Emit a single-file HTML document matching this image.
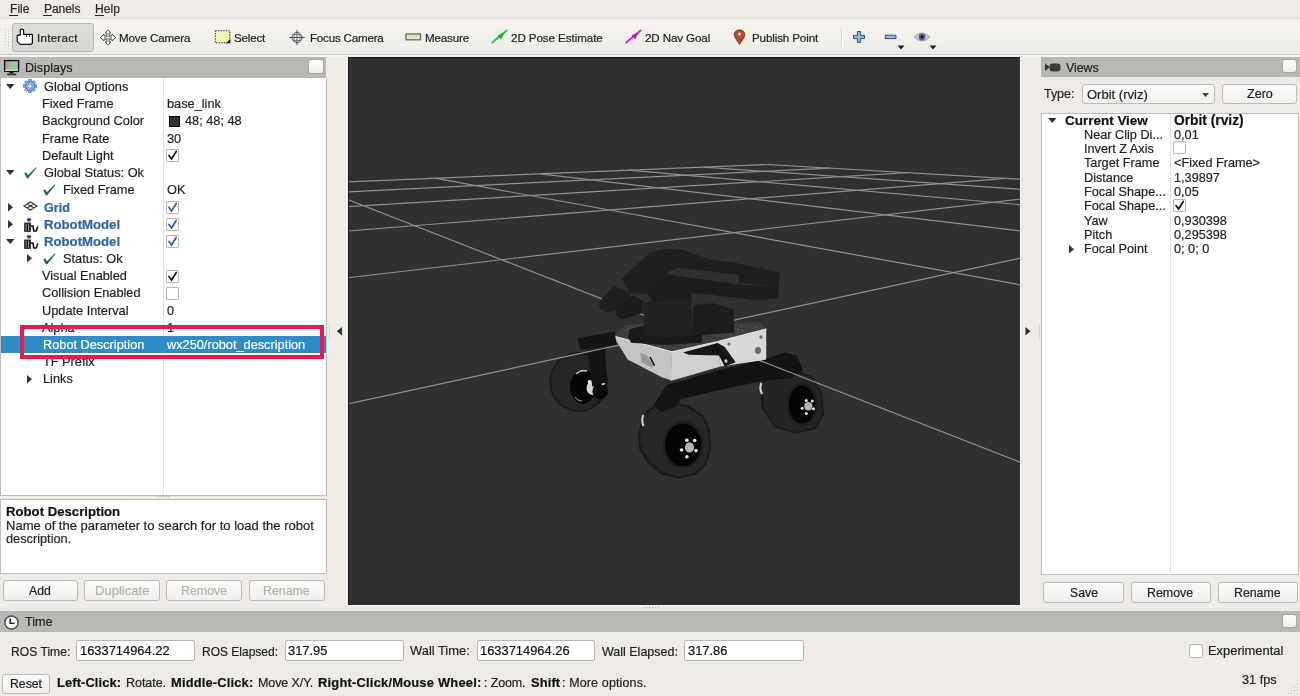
<!DOCTYPE html>
<html><head><meta charset="utf-8"><style>
html,body{margin:0;padding:0}
body{width:1300px;height:696px;overflow:hidden;position:relative;background:#eeebe7;font-family:"Liberation Sans",sans-serif;color:#1f1f1f}
.t{position:absolute;white-space:nowrap;line-height:1;will-change:transform;-webkit-text-stroke:0.2px currentColor}
svg{overflow:visible}
</style></head><body>
<div style="position:absolute;left:0px;top:0px;width:1300px;height:19px;background:#eeebe7"></div>
<div style="position:absolute;left:0px;top:18px;width:1300px;height:1px;background:#e2dfdb"></div>
<div class="t" style="left:9.50px;top:3.40px;font-size:12.00px;letter-spacing:0.060px;color:#2a2a2a">File</div>
<div style="position:absolute;left:9.0px;top:15px;width:9px;height:1px;background:#2a2a2a"></div>
<div class="t" style="left:43.50px;top:3.40px;font-size:12.00px;letter-spacing:-0.044px;color:#2a2a2a">Panels</div>
<div style="position:absolute;left:43.0px;top:15px;width:9px;height:1px;background:#2a2a2a"></div>
<div class="t" style="left:95.00px;top:3.40px;font-size:12.00px;letter-spacing:0.113px;color:#2a2a2a">Help</div>
<div style="position:absolute;left:94.5px;top:15px;width:9px;height:1px;background:#2a2a2a"></div>
<div style="position:absolute;left:0px;top:19px;width:1300px;height:35px;background:linear-gradient(#f7f4f0,#ecebe6)"></div>
<div style="position:absolute;left:0px;top:54px;width:1300px;height:1px;background:#cfccc7"></div>
<div style="position:absolute;left:0px;top:55px;width:1300px;height:2px;background:#f4f2ee"></div>
<div style="position:absolute;left:5px;top:29px;width:1px;height:1px;background:#bbb"></div>
<div style="position:absolute;left:8px;top:30px;width:1px;height:1px;background:#bbb"></div>
<div style="position:absolute;left:5px;top:32px;width:1px;height:1px;background:#bbb"></div>
<div style="position:absolute;left:8px;top:33px;width:1px;height:1px;background:#bbb"></div>
<div style="position:absolute;left:5px;top:35px;width:1px;height:1px;background:#bbb"></div>
<div style="position:absolute;left:8px;top:36px;width:1px;height:1px;background:#bbb"></div>
<div style="position:absolute;left:5px;top:38px;width:1px;height:1px;background:#bbb"></div>
<div style="position:absolute;left:8px;top:39px;width:1px;height:1px;background:#bbb"></div>
<div style="position:absolute;left:5px;top:41px;width:1px;height:1px;background:#bbb"></div>
<div style="position:absolute;left:8px;top:42px;width:1px;height:1px;background:#bbb"></div>
<div style="position:absolute;left:5px;top:44px;width:1px;height:1px;background:#bbb"></div>
<div style="position:absolute;left:8px;top:45px;width:1px;height:1px;background:#bbb"></div>
<div style="position:absolute;left:12px;top:23px;width:82px;height:29px;box-sizing:border-box;border:1px solid #b9b6b1;border-radius:3px;background:linear-gradient(#dedcd8,#d8d6d2)"></div>
<div class="t" style="left:36.50px;top:32.32px;font-size:11.60px;letter-spacing:0.259px;color:#222">Interact</div>
<div class="t" style="left:119.40px;top:32.32px;font-size:11.60px;letter-spacing:-0.131px;color:#222">Move Camera</div>
<div class="t" style="left:234.30px;top:32.32px;font-size:11.60px;letter-spacing:-0.190px;color:#222">Select</div>
<div class="t" style="left:309.60px;top:32.32px;font-size:11.60px;letter-spacing:-0.209px;color:#222">Focus Camera</div>
<div class="t" style="left:424.90px;top:32.32px;font-size:11.60px;letter-spacing:-0.171px;color:#222">Measure</div>
<div class="t" style="left:511.00px;top:32.32px;font-size:11.60px;letter-spacing:-0.071px;color:#222">2D Pose Estimate</div>
<div class="t" style="left:644.50px;top:32.32px;font-size:11.60px;letter-spacing:-0.111px;color:#222">2D Nav Goal</div>
<div class="t" style="left:751.50px;top:32.32px;font-size:11.60px;letter-spacing:-0.124px;color:#222">Publish Point</div>
<svg style="position:absolute;left:16px;top:28px;" width="18" height="18" viewBox="0 0 18 18"><path d="M4.3 7.6 V2.6 Q4.3 1.2 5.95 1.2 Q7.6 1.2 7.6 2.6 V6.4 H15.8 Q16.4 6.4 16.4 7 V15 L15 16.4 H4.2 L1.2 13.6 V7.8 Q1.2 7.2 1.8 7.2 H4.3" fill="#fff" stroke="#111" stroke-width="1.25" stroke-linejoin="round"/><path d="M10.5 6.6 V9 M13.5 6.6 V9" stroke="#333" stroke-width="1"/></svg>
<svg style="position:absolute;left:99px;top:29px;" width="18" height="17" viewBox="0 0 18 17"><g fill="#f4f4f4" stroke="#555" stroke-width="1"><path d="M9 0.8 L12 4 L10.2 4 L10.2 6.8 L13 6.8 L13 5 L16.5 8.5 L13 12 L13 10.2 L10.2 10.2 L10.2 13 L12 13 L9 16.2 L6 13 L7.8 13 L7.8 10.2 L5 10.2 L5 12 L1.5 8.5 L5 5 L5 6.8 L7.8 6.8 L7.8 4 L6 4 Z"/></g><path d="M5 8.5 Q9 6 13 8.5 M5 8.5 Q9 11 13 8.5" fill="none" stroke="#777" stroke-width="0.8"/></svg>
<svg style="position:absolute;left:213px;top:29px;" width="19" height="16" viewBox="0 0 19 16"><rect x="2.3" y="1.8" width="14.5" height="12" fill="#f7f3b4" stroke="#222" stroke-width="1" stroke-dasharray="1.4 1.2"/><path d="M17.3 10 L17.3 14.3 L13 14.3 Z" fill="#111"/></svg>
<svg style="position:absolute;left:288px;top:29px;" width="18" height="17" viewBox="0 0 18 17"><g fill="none" stroke="#555" stroke-width="1"><circle cx="9" cy="8.5" r="5" fill="#f4f4f4"/><path d="M9 0.8 V16.2 M1.2 8.5 H16.8"/><rect x="6" y="5.5" width="6" height="6" stroke="#777"/></g></svg>
<svg style="position:absolute;left:405px;top:33px;" width="16" height="8" viewBox="0 0 16 8"><rect x="1" y="1" width="14.5" height="5.8" fill="#e8e4c4" stroke="#6e6c5c" stroke-width="1.3"/><path d="M4 1.6 V2.8 M6.5 1.6 V2.8 M9 1.6 V2.8 M11.5 1.6 V2.8" stroke="#9a988a" stroke-width="0.7"/></svg>
<svg style="position:absolute;left:490px;top:29px;" width="18" height="16" viewBox="0 0 18 16"><path d="M2.3 13.5 L16.6 1.5" stroke="#2ccc44" stroke-width="2" stroke-linecap="round"/><path d="M14.8 3 L7.6 6.6 L11.2 10.4 Z" fill="#1fae36"/></svg>
<svg style="position:absolute;left:624px;top:29px;" width="18" height="16" viewBox="0 0 18 16"><path d="M2.3 13.5 L16.6 1.5" stroke="#d02ad2" stroke-width="2" stroke-linecap="round"/><path d="M14.8 3 L7.6 6.6 L11.2 10.4 Z" fill="#b01cb4"/></svg>
<svg style="position:absolute;left:733px;top:29px;" width="13" height="16" viewBox="0 0 13 16"><path d="M6.5 15.5 L2 8.5 Q0.5 6 1.5 3.8 Q3 0.8 6.5 0.8 Q10 0.8 11.5 3.8 Q12.5 6 11 8.5 Z" fill="#b34a2c" stroke="#7a2e18" stroke-width="0.8"/><circle cx="6.5" cy="5" r="1.6" fill="#f3e3dc"/></svg>
<div style="position:absolute;left:841px;top:28px;width:1px;height:19px;background:#d7d4cf"></div>
<div style="position:absolute;left:842px;top:28px;width:1px;height:19px;background:#fbfbfa"></div>
<svg style="position:absolute;left:852px;top:30px;" width="14" height="14" viewBox="0 0 14 14"><path d="M5.4 1.5 H8.6 V5.4 H12.5 V8.6 H8.6 V12.5 H5.4 V8.6 H1.5 V5.4 H5.4 Z" fill="#8db4e4" stroke="#34558a" stroke-width="1"/></svg>
<svg style="position:absolute;left:884px;top:34px;" width="13" height="6" viewBox="0 0 13 6"><rect x="1.3" y="1.2" width="10.6" height="3.4" fill="#8db4e4" stroke="#34558a" stroke-width="1"/></svg>
<svg style="position:absolute;left:897px;top:45px;" width="8" height="5" viewBox="0 0 8 5"><path d="M0.5 0.5 H7.5 L4 4.5 Z" fill="#222"/></svg>
<svg style="position:absolute;left:913px;top:31px;" width="18" height="12" viewBox="0 0 18 12"><path d="M1 6 Q9 -2 17 6 Q9 14 1 6 Z" fill="#c9c9dc" stroke="#9a9ab0" stroke-width="0.8"/><circle cx="9" cy="6" r="3.4" fill="#5a5f8a"/><circle cx="9" cy="6" r="1.4" fill="#111"/></svg>
<svg style="position:absolute;left:929px;top:45px;" width="8" height="5" viewBox="0 0 8 5"><path d="M0.5 0.5 H7.5 L4 4.5 Z" fill="#222"/></svg>
<div style="position:absolute;left:0px;top:57px;width:326px;height:21px;background:#bab8b4"></div>
<svg style="position:absolute;left:3px;top:59px;" width="17" height="17" viewBox="0 0 17 17"><defs><linearGradient id="mg" x1="0" x2="1"><stop offset="0" stop-color="#d9828f"/><stop offset="0.5" stop-color="#86d886"/><stop offset="1" stop-color="#b0a8f2"/></linearGradient></defs><rect x="1.6" y="1.6" width="14" height="10.8" fill="url(#mg)" stroke="#111" stroke-width="1.3"/><rect x="2.3" y="10.5" width="12.6" height="1.4" fill="#e8f0e8" opacity="0.7"/><rect x="6.5" y="12.8" width="4" height="1.6" fill="#111"/><rect x="4" y="14.4" width="9.5" height="1.8" rx="0.9" fill="#333"/></svg>
<div class="t" style="left:25.00px;top:61.95px;font-size:12.57px;color:#222">Displays</div>
<div style="position:absolute;left:308px;top:59px;width:16px;height:15px;box-sizing:border-box;border:1px solid #a8a6a2;border-radius:3px;background:linear-gradient(#fdfdfc,#f0efed)"></div>
<div style="position:absolute;left:0px;top:78px;width:327px;height:418px;box-sizing:border-box;background:#fff;border:1px solid #c0bdb8;border-top:none"></div>
<div style="position:absolute;left:163px;top:78px;width:1px;height:417px;background:#e3e3e3"></div>
<div style="position:absolute;left:1px;top:336px;width:325px;height:17px;background:#308cc6"></div>
<svg style="position:absolute;left:6px;top:83.8px;" width="9" height="6" viewBox="0 0 9 6"><path d="M0 0 H8.5 L4.25 5 Z" fill="#333"/></svg>
<svg style="position:absolute;left:23px;top:79.3px;" width="14" height="14" viewBox="0 0 14 14"><g transform="translate(7 7)"><g fill="#9ab8ec" stroke="#4f74b8" stroke-width="0.9"><rect x="-1.3" y="-6.3" width="2.6" height="2.6" transform="rotate(0)"/><rect x="-1.3" y="-6.3" width="2.6" height="2.6" transform="rotate(45)"/><rect x="-1.3" y="-6.3" width="2.6" height="2.6" transform="rotate(90)"/><rect x="-1.3" y="-6.3" width="2.6" height="2.6" transform="rotate(135)"/><rect x="-1.3" y="-6.3" width="2.6" height="2.6" transform="rotate(180)"/><rect x="-1.3" y="-6.3" width="2.6" height="2.6" transform="rotate(225)"/><rect x="-1.3" y="-6.3" width="2.6" height="2.6" transform="rotate(270)"/><rect x="-1.3" y="-6.3" width="2.6" height="2.6" transform="rotate(315)"/><circle r="4.3"/></g><circle r="2.2" fill="#dfeaff" stroke="#6a8ccc" stroke-width="0.9"/></g></svg>
<div class="t" style="left:44.30px;top:81.00px;font-size:12.75px;color:#1f1f1f">Global Options</div>
<div class="t" style="left:42.00px;top:98.20px;font-size:12.75px;color:#1f1f1f">Fixed Frame</div>
<div class="t" style="left:166.80px;top:98.20px;font-size:12.75px;color:#1f1f1f">base_link</div>
<div class="t" style="left:42.00px;top:115.40px;font-size:12.75px;color:#1f1f1f">Background Color</div>
<div style="position:absolute;left:169px;top:115.60000000000001px;width:11px;height:11px;box-sizing:border-box;border:1px solid #000;background:#303030"></div>
<div class="t" style="left:184.70px;top:115.40px;font-size:12.75px;color:#1f1f1f">48; 48; 48</div>
<div class="t" style="left:42.00px;top:132.60px;font-size:12.75px;color:#1f1f1f">Frame Rate</div>
<div class="t" style="left:166.80px;top:132.60px;font-size:12.75px;color:#1f1f1f">30</div>
<div class="t" style="left:42.00px;top:149.80px;font-size:12.75px;color:#1f1f1f">Default Light</div>
<div style="position:absolute;left:166px;top:149.4px;width:13px;height:13px;box-sizing:border-box;border:1px solid #b9b7b3;background:#fff;border-radius:1px"></div>
<svg style="position:absolute;left:167px;top:150.4px;" width="11" height="11" viewBox="0 0 11 11"><path d="M2 5.5 L4.6 9 L9.2 1.5" fill="none" stroke="#111" stroke-width="1.7" stroke-linecap="round"/></svg>
<svg style="position:absolute;left:6px;top:169.8px;" width="9" height="6" viewBox="0 0 9 6"><path d="M0 0 H8.5 L4.25 5 Z" fill="#333"/></svg>
<svg style="position:absolute;left:24px;top:167.0px;" width="13" height="12" viewBox="0 0 13 12"><path d="M0.3 6.6 L2.2 5.3 L3.9 8.2 L11.8 0.2 L12.4 0.9 L4.2 11.2 L2.9 11.2 Z" fill="#1f6b2c"/></svg>
<div class="t" style="left:44.20px;top:167.00px;font-size:12.75px;color:#1f1f1f">Global Status: Ok</div>
<svg style="position:absolute;left:43px;top:183.89999999999998px;" width="13" height="12" viewBox="0 0 13 12"><path d="M0.3 6.6 L2.2 5.3 L3.9 8.2 L11.8 0.2 L12.4 0.9 L4.2 11.2 L2.9 11.2 Z" fill="#1f6b2c"/></svg>
<div class="t" style="left:63.20px;top:184.20px;font-size:12.75px;color:#1f1f1f">Fixed Frame</div>
<div class="t" style="left:166.80px;top:184.20px;font-size:12.75px;color:#1f1f1f">OK</div>
<svg style="position:absolute;left:7.6px;top:202.7px;" width="6" height="9" viewBox="0 0 6 9"><path d="M0 0 V8.5 L5 4.25 Z" fill="#333"/></svg>
<svg style="position:absolute;left:23px;top:201.39999999999998px;" width="15" height="10" viewBox="0 0 15 10"><g fill="none" stroke="#333" stroke-width="1.1"><path d="M7.5 1 L14 5 L7.5 9 L1 5 Z M4.25 3 L10.75 7 M10.75 3 L4.25 7"/></g></svg>
<div class="t" style="left:44.30px;top:201.52px;font-size:12.60px;font-weight:bold;color:#2f649f">Grid</div>
<div style="position:absolute;left:166px;top:200.99999999999997px;width:13px;height:13px;box-sizing:border-box;border:1px solid #b9b7b3;background:#fff;border-radius:1px"></div>
<svg style="position:absolute;left:167px;top:201.99999999999997px;" width="11" height="11" viewBox="0 0 11 11"><path d="M2 5.5 L4.6 9 L9.2 1.5" fill="none" stroke="#2a5a9a" stroke-width="1.7" stroke-linecap="round"/></svg>
<svg style="position:absolute;left:7.6px;top:219.9px;" width="6" height="9" viewBox="0 0 6 9"><path d="M0 0 V8.5 L5 4.25 Z" fill="#333"/></svg>
<svg style="position:absolute;left:23px;top:216.6px;" width="16" height="16" viewBox="0 0 16 16"><ellipse cx="6" cy="2.6" rx="2.3" ry="1.5" fill="#3c3c80"/><rect x="4.6" y="4.2" width="2.8" height="1" fill="#888"/><rect x="1.2" y="5.6" width="6.6" height="9.2" fill="#111"/><path d="M3.1 6.5 V13.8 M5.6 6.5 V13.8" stroke="#cfcfcf" stroke-width="0.8"/><path d="M7.6 9 H10 L10.8 14 H13.2 L14.8 9.4" fill="none" stroke="#111" stroke-width="1.6"/></svg>
<div class="t" style="left:44.30px;top:218.26px;font-size:13.18px;font-weight:bold;color:#2f649f">RobotModel</div>
<div style="position:absolute;left:166px;top:218.2px;width:13px;height:13px;box-sizing:border-box;border:1px solid #b9b7b3;background:#fff;border-radius:1px"></div>
<svg style="position:absolute;left:167px;top:219.2px;" width="11" height="11" viewBox="0 0 11 11"><path d="M2 5.5 L4.6 9 L9.2 1.5" fill="none" stroke="#2a5a9a" stroke-width="1.7" stroke-linecap="round"/></svg>
<svg style="position:absolute;left:6px;top:238.6px;" width="9" height="6" viewBox="0 0 9 6"><path d="M0 0 H8.5 L4.25 5 Z" fill="#333"/></svg>
<svg style="position:absolute;left:23px;top:233.79999999999998px;" width="16" height="16" viewBox="0 0 16 16"><ellipse cx="6" cy="2.6" rx="2.3" ry="1.5" fill="#3c3c80"/><rect x="4.6" y="4.2" width="2.8" height="1" fill="#888"/><rect x="1.2" y="5.6" width="6.6" height="9.2" fill="#111"/><path d="M3.1 6.5 V13.8 M5.6 6.5 V13.8" stroke="#cfcfcf" stroke-width="0.8"/><path d="M7.6 9 H10 L10.8 14 H13.2 L14.8 9.4" fill="none" stroke="#111" stroke-width="1.6"/></svg>
<div class="t" style="left:44.30px;top:235.46px;font-size:13.18px;font-weight:bold;color:#2f649f">RobotModel</div>
<div style="position:absolute;left:166px;top:235.39999999999998px;width:13px;height:13px;box-sizing:border-box;border:1px solid #b9b7b3;background:#fff;border-radius:1px"></div>
<svg style="position:absolute;left:167px;top:236.39999999999998px;" width="11" height="11" viewBox="0 0 11 11"><path d="M2 5.5 L4.6 9 L9.2 1.5" fill="none" stroke="#2a5a9a" stroke-width="1.7" stroke-linecap="round"/></svg>
<svg style="position:absolute;left:26.6px;top:254.3px;" width="6" height="9" viewBox="0 0 6 9"><path d="M0 0 V8.5 L5 4.25 Z" fill="#333"/></svg>
<svg style="position:absolute;left:43px;top:252.7px;" width="13" height="12" viewBox="0 0 13 12"><path d="M0.3 6.6 L2.2 5.3 L3.9 8.2 L11.8 0.2 L12.4 0.9 L4.2 11.2 L2.9 11.2 Z" fill="#1f6b2c"/></svg>
<div class="t" style="left:63.20px;top:253.00px;font-size:12.75px;color:#1f1f1f">Status: Ok</div>
<div class="t" style="left:42.00px;top:270.20px;font-size:12.75px;color:#1f1f1f">Visual Enabled</div>
<div style="position:absolute;left:166px;top:269.8px;width:13px;height:13px;box-sizing:border-box;border:1px solid #b9b7b3;background:#fff;border-radius:1px"></div>
<svg style="position:absolute;left:167px;top:270.8px;" width="11" height="11" viewBox="0 0 11 11"><path d="M2 5.5 L4.6 9 L9.2 1.5" fill="none" stroke="#111" stroke-width="1.7" stroke-linecap="round"/></svg>
<div class="t" style="left:42.00px;top:287.40px;font-size:12.75px;color:#1f1f1f">Collision Enabled</div>
<div style="position:absolute;left:166px;top:287.0px;width:13px;height:13px;box-sizing:border-box;border:1px solid #b9b7b3;background:#fff;border-radius:1px"></div>
<div class="t" style="left:42.00px;top:304.60px;font-size:12.75px;color:#1f1f1f">Update Interval</div>
<div class="t" style="left:166.80px;top:304.60px;font-size:12.75px;color:#1f1f1f">0</div>
<div class="t" style="left:42.00px;top:321.80px;font-size:12.75px;color:#1f1f1f">Alpha</div>
<div class="t" style="left:166.80px;top:321.80px;font-size:12.75px;color:#1f1f1f">1</div>
<div class="t" style="left:42.60px;top:339.00px;font-size:12.75px;color:#ffffff">Robot Description</div>
<div class="t" style="left:166.86px;top:339.00px;font-size:12.75px;color:#ffffff">wx250/robot_description</div>
<div class="t" style="left:42.60px;top:356.20px;font-size:12.75px;color:#1f1f1f">TF Prefix</div>
<svg style="position:absolute;left:26.6px;top:374.7px;" width="6" height="9" viewBox="0 0 6 9"><path d="M0 0 V8.5 L5 4.25 Z" fill="#333"/></svg>
<div class="t" style="left:42.60px;top:373.40px;font-size:12.75px;color:#1f1f1f">Links</div>
<div style="position:absolute;left:20px;top:325px;width:304px;height:34px;box-sizing:border-box;border:4.4px solid #e31b4e"></div>
<div style="position:absolute;left:158px;top:496px;width:1px;height:1px;background:#c0bdb8"></div>
<div style="position:absolute;left:160px;top:496px;width:1px;height:1px;background:#c0bdb8"></div>
<div style="position:absolute;left:162px;top:496px;width:1px;height:1px;background:#c0bdb8"></div>
<div style="position:absolute;left:164px;top:496px;width:1px;height:1px;background:#c0bdb8"></div>
<div style="position:absolute;left:166px;top:496px;width:1px;height:1px;background:#c0bdb8"></div>
<div style="position:absolute;left:168px;top:496px;width:1px;height:1px;background:#c0bdb8"></div>
<div style="position:absolute;left:0px;top:499px;width:327px;height:75px;box-sizing:border-box;background:#fff;border:1px solid #c0bdb8"></div>
<div class="t" style="left:5.60px;top:504.96px;font-size:13.18px;font-weight:bold;color:#111">Robot Description</div>
<div class="t" style="left:5.60px;top:519.17px;font-size:13.04px;color:#1f1f1f">Name of the parameter to search for to load the robot</div>
<div class="t" style="left:5.60px;top:533.40px;font-size:12.75px;color:#1f1f1f">description.</div>
<div style="position:absolute;left:2.5px;top:580px;width:75.0px;height:21px;box-sizing:border-box;border:1px solid #bdbab5;border-radius:3px;background:linear-gradient(#fbfbfa,#efeeec)"></div>
<div class="t" style="left:29.00px;top:585.10px;font-size:12.25px;color:#1f1f1f">Add</div>
<div style="position:absolute;left:84.4px;top:580px;width:75.19999999999999px;height:21px;box-sizing:border-box;border:1px solid #bdbab5;border-radius:3px;background:linear-gradient(#fbfbfa,#efeeec)"></div>
<div class="t" style="left:94.50px;top:584.44px;font-size:13.07px;color:#b3b1ad">Duplicate</div>
<div style="position:absolute;left:166.4px;top:580px;width:75.4px;height:21px;box-sizing:border-box;border:1px solid #bdbab5;border-radius:3px;background:linear-gradient(#fbfbfa,#efeeec)"></div>
<div class="t" style="left:181.00px;top:584.98px;font-size:12.40px;color:#b3b1ad">Remove</div>
<div style="position:absolute;left:248.7px;top:580px;width:76.0px;height:21px;box-sizing:border-box;border:1px solid #bdbab5;border-radius:3px;background:linear-gradient(#fbfbfa,#efeeec)"></div>
<div class="t" style="left:262.90px;top:585.02px;font-size:12.35px;color:#b3b1ad">Rename</div>
<div style="position:absolute;left:329px;top:325px;width:1px;height:1px;background:#bfbcb7"></div>
<div style="position:absolute;left:329px;top:327px;width:1px;height:1px;background:#bfbcb7"></div>
<div style="position:absolute;left:329px;top:329px;width:1px;height:1px;background:#bfbcb7"></div>
<div style="position:absolute;left:329px;top:331px;width:1px;height:1px;background:#bfbcb7"></div>
<div style="position:absolute;left:329px;top:333px;width:1px;height:1px;background:#bfbcb7"></div>
<div style="position:absolute;left:329px;top:335px;width:1px;height:1px;background:#bfbcb7"></div>
<div style="position:absolute;left:329px;top:337px;width:1px;height:1px;background:#bfbcb7"></div>
<div style="position:absolute;left:329px;top:339px;width:1px;height:1px;background:#bfbcb7"></div>
<svg style="position:absolute;left:336px;top:327px;" width="7" height="9" viewBox="0 0 7 9"><path d="M6 0 V8.5 L0.8 4.25 Z" fill="#333"/></svg>
<div style="position:absolute;left:1039px;top:325px;width:1px;height:1px;background:#bfbcb7"></div>
<div style="position:absolute;left:1039px;top:327px;width:1px;height:1px;background:#bfbcb7"></div>
<div style="position:absolute;left:1039px;top:329px;width:1px;height:1px;background:#bfbcb7"></div>
<div style="position:absolute;left:1039px;top:331px;width:1px;height:1px;background:#bfbcb7"></div>
<div style="position:absolute;left:1039px;top:333px;width:1px;height:1px;background:#bfbcb7"></div>
<div style="position:absolute;left:1039px;top:335px;width:1px;height:1px;background:#bfbcb7"></div>
<div style="position:absolute;left:1039px;top:337px;width:1px;height:1px;background:#bfbcb7"></div>
<div style="position:absolute;left:1039px;top:339px;width:1px;height:1px;background:#bfbcb7"></div>
<svg style="position:absolute;left:1025px;top:326.5px;" width="7" height="9" viewBox="0 0 7 9"><path d="M0.5 0 V8.5 L5.5 4.25 Z" fill="#333"/></svg>
<div style="position:absolute;left:346px;top:57px;width:1px;height:549px;background:#fafafa"></div>
<div style="position:absolute;left:1020px;top:57px;width:1px;height:549px;background:#fafafa"></div>
<div style="position:absolute;left:347px;top:605px;width:674px;height:1px;background:#fafafa"></div>
<div style="position:absolute;left:643px;top:607px;width:1px;height:1px;background:#b5b2ad"></div>
<div style="position:absolute;left:646px;top:607px;width:1px;height:1px;background:#b5b2ad"></div>
<div style="position:absolute;left:649px;top:607px;width:1px;height:1px;background:#b5b2ad"></div>
<div style="position:absolute;left:652px;top:607px;width:1px;height:1px;background:#b5b2ad"></div>
<div style="position:absolute;left:655px;top:607px;width:1px;height:1px;background:#b5b2ad"></div>
<div style="position:absolute;left:658px;top:607px;width:1px;height:1px;background:#b5b2ad"></div>
<div style="position:absolute;left:348px;top:57px;width:672px;height:548px;background:#303030;overflow:hidden">
<svg width="672" height="548" style="position:absolute;left:0;top:0" viewBox="348 57 672 548">
<ellipse cx="578.6" cy="382.0" rx="28.4" ry="29.0" fill="#262626" stroke="#1c1c1c" stroke-width="2"/><ellipse cx="583.0" cy="386.7" rx="12.8" ry="17.2" fill="#050505" /><path d="M576 374 Q581 369 587 371" stroke="#d0d0d0" stroke-width="1.5" fill="none"/><path d="M575 397 Q578 401 582 401" stroke="#9a9a9a" stroke-width="1.2" fill="none"/><ellipse cx="593.0" cy="388.0" rx="6.5" ry="7.2" fill="#d8d8d8" /><ellipse cx="600.2" cy="391.3" rx="7.8" ry="8.2" fill="#0a0a0a" /><ellipse cx="603.0" cy="383.5" rx="1.8" ry="1.8" fill="#dcdcdc" /><ellipse cx="590.0" cy="381.8" rx="2.4" ry="1.8" fill="#eeeeee" /><polygon points="760.8,386.3 770.8,374.2 791.0,370.2 811.1,376.2 821.1,392.3 823.2,414.4 815.1,428.5 795.0,432.6 774.9,426.5 762.8,408.4" fill="#252525" stroke="#1b1b1b" stroke-width="2" stroke-linejoin="round"/><ellipse cx="802.0" cy="404.4" rx="15.5" ry="21.5" fill="#1e1e1e" /><ellipse cx="802.0" cy="404.4" rx="13.2" ry="19.1" fill="#050505" /><ellipse cx="808.3" cy="406.2" rx="4.0" ry="4.2" fill="#b5b5b5" /><ellipse cx="806.3" cy="400.6" rx="1.5" ry="1.5" fill="#e4e4e4" /><ellipse cx="812.3" cy="401.0" rx="1.5" ry="1.5" fill="#e4e4e4" /><ellipse cx="813.5" cy="408.8" rx="1.5" ry="1.5" fill="#e4e4e4" /><ellipse cx="806.3" cy="413.6" rx="1.5" ry="1.5" fill="#e4e4e4" /><ellipse cx="802.1" cy="408.2" rx="1.5" ry="1.5" fill="#e4e4e4" /><path d="M761.5 383 Q759 388 762 394" stroke="#cfcfcf" stroke-width="2.2" fill="none"/><polygon points="639.1,433.8 644.2,414.4 655.9,405.3 672.7,402.8 688.2,406.6 702.4,415.7 708.9,428.6 710.2,449.3 705.0,464.9 694.7,473.9 679.2,477.8 662.3,473.9 648.1,462.3 640.3,449.3" fill="#272727" stroke="#1a1a1a" stroke-width="2" stroke-linejoin="round"/><path d="M644 420 Q660 400 690 406 Q708 418 709 440" fill="none" stroke="#1c1c1c" stroke-width="1.6" stroke-dasharray="2 2.5"/><path d="M642 445 Q648 468 675 476" fill="none" stroke="#1c1c1c" stroke-width="1.6" stroke-dasharray="2 2.5"/><ellipse cx="683.0" cy="444.8" rx="20.5" ry="23.8" fill="#1e1e1e" /><ellipse cx="683.0" cy="444.8" rx="18.1" ry="21.3" fill="#040404" /><ellipse cx="689.5" cy="447.4" rx="4.6" ry="5.2" fill="#b4b4b4" /><ellipse cx="686.9" cy="440.3" rx="1.8" ry="1.8" fill="#e4e4e4" /><ellipse cx="694.7" cy="440.5" rx="1.8" ry="1.8" fill="#e4e4e4" /><ellipse cx="696.0" cy="450.6" rx="1.8" ry="1.8" fill="#e4e4e4" /><ellipse cx="686.9" cy="456.8" rx="1.8" ry="1.8" fill="#e4e4e4" /><ellipse cx="681.5" cy="450.0" rx="1.8" ry="1.8" fill="#e4e4e4" /><path d="M643.5 415 Q641 420 643.5 426" stroke="#c8c8c8" stroke-width="2.2" fill="none"/><polygon points="577.2,338.4 615.2,331.5 616.3,345.3 580.7,349.9" fill="#151515" /><polygon points="587.6,349.9 604.8,347.6 607.1,382.0 592.2,386.7" fill="#141414" /><polygon points="666.2,385.3 718.5,370.2 760.8,360.1 784.9,352.5 797.0,355.7 803.0,370.2 791.0,378.2 760.8,381.2 714.5,391.3 670.2,401.4 665.2,398.4" fill="#131313" /><polygon points="666.2,385.3 654.1,404.4 660.2,412.4 676.3,406.4 682.3,396.3" fill="#161616" />
<g transform="translate(348 57)"><g stroke="#8e8e8e" stroke-width="1.2"><line x1="419.5" y1="107.5" x2="11316.5" y2="740.8"/><line x1="419.5" y1="107.5" x2="-1611.6" y2="191.2"/><line x1="355.3" y1="110.1" x2="401882.0" y2="28233.1"/><line x1="482.2" y1="111.1" x2="-2294.4" y2="247.7"/><line x1="280.6" y1="113.2" x2="319386.8" y2="28233.1"/><line x1="559.6" y1="115.6" x2="-4221.1" y2="407.1"/><line x1="192.5" y1="116.9" x2="236891.5" y2="28233.1"/><line x1="657.4" y1="121.3" x2="-45534.4" y2="3824.9"/><line x1="87.0" y1="121.2" x2="154396.3" y2="28233.1"/><line x1="785.2" y1="128.8" x2="-239255.4" y2="28233.1"/><line x1="-41.5" y1="126.5" x2="71901.0" y2="28233.1"/><line x1="959.0" y1="138.9" x2="-128547.8" y2="28233.1"/><line x1="-201.6" y1="133.1" x2="-10594.2" y2="28233.1"/><line x1="1209.2" y1="153.4" x2="-17840.1" y2="28233.1"/><line x1="-406.3" y1="141.5" x2="-93089.4" y2="28233.1"/><line x1="1600.3" y1="176.1" x2="92867.5" y2="28233.1"/><line x1="-677.6" y1="152.7" x2="-175584.7" y2="28233.1"/><line x1="2298.3" y1="216.7" x2="203575.1" y2="28233.1"/><line x1="-1054.1" y1="168.2" x2="-258079.9" y2="28233.1"/><line x1="3897.3" y1="309.6" x2="314282.7" y2="28233.1"/><line x1="-1611.6" y1="191.2" x2="-340575.2" y2="28233.1"/><line x1="11316.5" y1="740.8" x2="424990.4" y2="28233.1"/></g></g>
<polygon points="615.2,333.8 626.7,324.6 760.0,322.3 766.9,329.2 766.9,331.5 679.5,352.2 656.6,347.6 615.2,336.1" fill="#3e3e3e" /><rect x="710.1" y="324.0" width="1" height="1" fill="#7a7a7a"/><rect x="742.3" y="329.8" width="1" height="1" fill="#7a7a7a"/><rect x="629.8" y="326.1" width="1" height="1" fill="#7a7a7a"/><rect x="736.7" y="334.3" width="1" height="1" fill="#7a7a7a"/><rect x="707.8" y="326.7" width="1" height="1" fill="#7a7a7a"/><rect x="726.7" y="331.3" width="1" height="1" fill="#7a7a7a"/><rect x="737.2" y="329.2" width="1" height="1" fill="#7a7a7a"/><rect x="633.4" y="337.9" width="1" height="1" fill="#7a7a7a"/><rect x="737.6" y="332.4" width="1" height="1" fill="#7a7a7a"/><rect x="754.9" y="326.7" width="1" height="1" fill="#7a7a7a"/><rect x="658.6" y="346.3" width="1" height="1" fill="#7a7a7a"/><rect x="696.3" y="346.5" width="1" height="1" fill="#7a7a7a"/><rect x="726.5" y="338.9" width="1" height="1" fill="#7a7a7a"/><rect x="700.7" y="346.8" width="1" height="1" fill="#7a7a7a"/><rect x="664.0" y="345.2" width="1" height="1" fill="#7a7a7a"/><rect x="725.8" y="324.6" width="1" height="1" fill="#7a7a7a"/><rect x="713.1" y="340.9" width="1" height="1" fill="#7a7a7a"/><rect x="673.3" y="348.2" width="1" height="1" fill="#7a7a7a"/><rect x="632.0" y="330.1" width="1" height="1" fill="#7a7a7a"/><rect x="725.5" y="327.5" width="1" height="1" fill="#7a7a7a"/><rect x="706.4" y="343.8" width="1" height="1" fill="#7a7a7a"/><rect x="730.1" y="334.0" width="1" height="1" fill="#7a7a7a"/><rect x="636.8" y="335.8" width="1" height="1" fill="#7a7a7a"/><rect x="761.8" y="328.6" width="1" height="1" fill="#7a7a7a"/><rect x="709.6" y="332.4" width="1" height="1" fill="#7a7a7a"/><rect x="756.8" y="331.0" width="1" height="1" fill="#7a7a7a"/><rect x="718.0" y="324.9" width="1" height="1" fill="#7a7a7a"/><rect x="631.0" y="339.1" width="1" height="1" fill="#7a7a7a"/><rect x="734.9" y="338.1" width="1" height="1" fill="#7a7a7a"/><rect x="740.5" y="325.4" width="1" height="1" fill="#7a7a7a"/><rect x="628.0" y="336.0" width="1" height="1" fill="#7a7a7a"/><rect x="728.5" y="330.6" width="1" height="1" fill="#7a7a7a"/><rect x="629.3" y="331.3" width="1" height="1" fill="#7a7a7a"/><rect x="737.9" y="329.4" width="1" height="1" fill="#7a7a7a"/><rect x="627.0" y="328.9" width="1" height="1" fill="#7a7a7a"/><polygon points="615.2,336.7 672.0,351.9 671.3,380.3 662.3,377.6 627.7,359.6 616.6,341.6" fill="#c4c4c4" /><polygon points="672.0,351.9 717.7,341.6 720.5,366.5 670.6,381.0" fill="#d0d0d0" /><polygon points="717.7,341.6 766.2,329.1 766.2,359.6 720.5,366.5" fill="#d8d8d8" /><path d="M615.5 336.5 L672 351.8 L717.7 341.5 L766.5 329" stroke="#e6e6e6" stroke-width="1.2" fill="none"/><polygon points="640.2,352.6 647.1,355.4 654.0,365.1 652.6,367.9 641.6,362.3" fill="#9a9a9a" /><path d="M650 357 L654.5 365.5" stroke="#111" stroke-width="1.6"/><ellipse cx="758.0" cy="350.5" rx="3.0" ry="3.6" fill="#6a6a6a" /><ellipse cx="761.0" cy="337.0" rx="1.6" ry="1.7" fill="#6a6a6a" /><ellipse cx="729.0" cy="344.0" rx="1.6" ry="1.6" fill="#6a6a6a" /><polygon points="683.1,352.6 717.7,343.0 724.7,347.1 735.7,362.3 724.7,366.5 719.0,355.4 688.6,354.7" fill="#151515" /><ellipse cx="726.0" cy="361.0" rx="1.6" ry="1.8" fill="#cfcfcf" /><polygon points="629.5,329.3 642.2,326.2 699.1,326.6 702.6,333.3 701.5,342.8 664.3,345.1 631.1,342.8 627.9,336.4" fill="#1a1a1a" /><polygon points="643.8,302.0 691.2,298.2 693.1,334.9 669.1,337.2 643.8,335.7" fill="#222222" /><polygon points="693.1,305.1 713.3,303.2 733.9,309.6 734.2,332.5 693.1,335.7" fill="#1d1d1d" /><polygon points="664.3,248.7 683.3,249.8 707.0,258.7 740.2,263.7 779.7,272.4 778.5,287.4 738.6,282.7 738.6,275.1 678.5,267.7 664.3,272.4" fill="#1f1f1f" /><polygon points="664.3,274.0 737.0,284.3 778.5,287.4 778.1,298.2 757.6,300.4 691.2,292.5 691.2,298.8 653.2,302.0 646.9,293.8 656.4,276.4" fill="#1d1d1d" /><polygon points="621.6,278.7 650.9,251.9 664.3,248.7 669.1,272.4 646.9,294.5 630.3,293.0" fill="#202020" /><polygon points="598.7,302.0 613.7,286.6 630.3,292.2 629.5,306.4 607.4,312.4 599.8,308.3" fill="#1f1f1f" /><polygon points="615.3,310.4 632.7,295.3 643.0,300.4 642.5,313.0 622.4,319.4 616.9,316.2" fill="#1c1c1c" />
</svg></div>
<div style="position:absolute;left:348px;top:57px;width:672px;height:1px;background:#1c1c1c"></div>
<div style="position:absolute;left:348px;top:57px;width:1px;height:548px;background:#1c1c1c"></div>
<div style="position:absolute;left:1041px;top:57px;width:259px;height:20px;background:#bab8b4"></div>
<svg style="position:absolute;left:1044px;top:62px;" width="18" height="11" viewBox="0 0 18 11"><path d="M1 1.5 L6 5 L1 9 Z" fill="#3a3a3a"/><rect x="5.5" y="1.5" width="11" height="8" rx="3" fill="#3a3a3a"/></svg>
<div class="t" style="left:1066.30px;top:61.73px;font-size:12.34px;color:#222">Views</div>
<div style="position:absolute;left:1282px;top:59px;width:15px;height:14px;box-sizing:border-box;border:1px solid #a8a6a2;border-radius:3px;background:linear-gradient(#fdfdfc,#f0efed)"></div>
<div class="t" style="left:1043.60px;top:88.05px;font-size:12.43px;color:#1f1f1f">Type:</div>
<div style="position:absolute;left:1081.7px;top:84px;width:133.5px;height:20px;box-sizing:border-box;border:1px solid #bdbab5;border-radius:3px;background:linear-gradient(#fbfbfa,#efeeec)"></div>
<div class="t" style="left:1086.70px;top:87.57px;font-size:13.03px;color:#1f1f1f">Orbit (rviz)</div>
<svg style="position:absolute;left:1202px;top:92.5px;" width="8" height="5" viewBox="0 0 8 5"><path d="M0 0 H7 L3.5 4 Z" fill="#444"/></svg>
<div style="position:absolute;left:1222.2px;top:84px;width:75.09999999999991px;height:20px;box-sizing:border-box;border:1px solid #bdbab5;border-radius:3px;background:linear-gradient(#fbfbfa,#efeeec)"></div>
<div class="t" style="left:1246.90px;top:87.96px;font-size:12.55px;color:#1f1f1f">Zero</div>
<div style="position:absolute;left:1041px;top:113px;width:258px;height:462px;box-sizing:border-box;background:#fff;border:1px solid #c0bdb8"></div>
<div style="position:absolute;left:1170px;top:114px;width:1px;height:461px;background:#e3e3e3"></div>
<svg style="position:absolute;left:1047.5px;top:118px;" width="9" height="6" viewBox="0 0 9 6"><path d="M0 0 H8.5 L4.25 5 Z" fill="#333"/></svg>
<div class="t" style="left:1064.90px;top:113.92px;font-size:13.48px;font-weight:bold;color:#111">Current View</div>
<div class="t" style="left:1173.50px;top:113.67px;font-size:13.79px;font-weight:bold;color:#111">Orbit (rviz)</div>
<div class="t" style="left:1083.70px;top:128.83px;font-size:12.70px;color:#1f1f1f">Near Clip Di...</div>
<div class="t" style="left:1173.60px;top:128.83px;font-size:12.70px;color:#1f1f1f">0,01</div>
<div class="t" style="left:1083.70px;top:143.12px;font-size:12.70px;color:#1f1f1f">Invert Z Axis</div>
<div style="position:absolute;left:1173.2px;top:141.48px;width:13px;height:13px;box-sizing:border-box;border:1px solid #b9b7b3;background:#fff;border-radius:1px"></div>
<div class="t" style="left:1083.70px;top:157.41px;font-size:12.70px;color:#1f1f1f">Target Frame</div>
<div class="t" style="left:1173.60px;top:157.41px;font-size:12.70px;color:#1f1f1f">&lt;Fixed Frame&gt;</div>
<div class="t" style="left:1083.70px;top:171.70px;font-size:12.70px;color:#1f1f1f">Distance</div>
<div class="t" style="left:1173.60px;top:171.70px;font-size:12.70px;color:#1f1f1f">1,39897</div>
<div class="t" style="left:1083.70px;top:185.99px;font-size:12.70px;color:#1f1f1f">Focal Shape...</div>
<div class="t" style="left:1173.60px;top:185.99px;font-size:12.70px;color:#1f1f1f">0,05</div>
<div class="t" style="left:1083.70px;top:200.28px;font-size:12.70px;color:#1f1f1f">Focal Shape...</div>
<div style="position:absolute;left:1173.2px;top:198.64px;width:13px;height:13px;box-sizing:border-box;border:1px solid #b9b7b3;background:#fff;border-radius:1px"></div>
<svg style="position:absolute;left:1174.2px;top:199.64px;" width="11" height="11" viewBox="0 0 11 11"><path d="M2 5.5 L4.6 9 L9.2 1.5" fill="none" stroke="#111" stroke-width="1.7" stroke-linecap="round"/></svg>
<div class="t" style="left:1083.70px;top:214.57px;font-size:12.70px;color:#1f1f1f">Yaw</div>
<div class="t" style="left:1173.60px;top:214.57px;font-size:12.70px;color:#1f1f1f">0,930398</div>
<div class="t" style="left:1083.70px;top:228.86px;font-size:12.70px;color:#1f1f1f">Pitch</div>
<div class="t" style="left:1173.60px;top:228.86px;font-size:12.70px;color:#1f1f1f">0,295398</div>
<svg style="position:absolute;left:1068.5px;top:245px;" width="6" height="9" viewBox="0 0 6 9"><path d="M0 0 V8.5 L5 4.25 Z" fill="#333"/></svg>
<div class="t" style="left:1083.70px;top:243.15px;font-size:12.70px;color:#1f1f1f">Focal Point</div>
<div class="t" style="left:1173.60px;top:243.15px;font-size:12.70px;color:#1f1f1f">0; 0; 0</div>
<div style="position:absolute;left:1043.4px;top:581.6px;width:80.59999999999991px;height:21.199999999999932px;box-sizing:border-box;border:1px solid #bdbab5;border-radius:3px;background:linear-gradient(#fbfbfa,#efeeec)"></div>
<div class="t" style="left:1069.70px;top:587.48px;font-size:12.28px;color:#1f1f1f">Save</div>
<div style="position:absolute;left:1130.5px;top:581.6px;width:80.09999999999991px;height:21.199999999999932px;box-sizing:border-box;border:1px solid #bdbab5;border-radius:3px;background:linear-gradient(#fbfbfa,#efeeec)"></div>
<div class="t" style="left:1147.30px;top:587.38px;font-size:12.40px;color:#1f1f1f">Remove</div>
<div style="position:absolute;left:1217.5px;top:581.6px;width:80.5px;height:21.199999999999932px;box-sizing:border-box;border:1px solid #bdbab5;border-radius:3px;background:linear-gradient(#fbfbfa,#efeeec)"></div>
<div class="t" style="left:1234.40px;top:587.44px;font-size:12.33px;color:#1f1f1f">Rename</div>
<div style="position:absolute;left:0px;top:611px;width:1300px;height:21px;background:#bab8b4"></div>
<svg style="position:absolute;left:3px;top:613.8px;" width="17" height="17" viewBox="0 0 17 17"><circle cx="8.5" cy="8.5" r="6.6" fill="#fafafa" stroke="#505050" stroke-width="1.5"/><path d="M7.2 4.6 V9.2 H11.5" fill="none" stroke="#222" stroke-width="1.5"/></svg>
<div class="t" style="left:25.00px;top:615.93px;font-size:12.59px;color:#222">Time</div>
<div style="position:absolute;left:1282px;top:614px;width:15px;height:14px;box-sizing:border-box;border:1px solid #a8a6a2;border-radius:3px;background:linear-gradient(#fdfdfc,#f0efed)"></div>
<div class="t" style="left:10.50px;top:646.00px;font-size:12.13px;color:#1f1f1f">ROS Time:</div>
<div style="position:absolute;left:76.3px;top:639.6px;width:119.2px;height:21.8px;box-sizing:border-box;border:1px solid #bab7b2;border-radius:2px;background:#fff"></div>
<div class="t" style="left:79.50px;top:644.88px;font-size:12.90px;color:#111">1633714964.22</div>
<div class="t" style="left:201.50px;top:646.09px;font-size:12.01px;color:#1f1f1f">ROS Elapsed:</div>
<div style="position:absolute;left:284.7px;top:639.6px;width:118.90000000000003px;height:21.8px;box-sizing:border-box;border:1px solid #bab7b2;border-radius:2px;background:#fff"></div>
<div class="t" style="left:287.90px;top:644.88px;font-size:12.90px;color:#111">317.95</div>
<div class="t" style="left:409.70px;top:645.37px;font-size:12.92px;color:#1f1f1f">Wall Time:</div>
<div style="position:absolute;left:476.6px;top:639.6px;width:118.89999999999998px;height:21.8px;box-sizing:border-box;border:1px solid #bab7b2;border-radius:2px;background:#fff"></div>
<div class="t" style="left:479.80px;top:644.88px;font-size:12.90px;color:#111">1633714964.26</div>
<div class="t" style="left:602.00px;top:645.70px;font-size:12.49px;color:#1f1f1f">Wall Elapsed:</div>
<div style="position:absolute;left:684.3px;top:639.6px;width:119.60000000000002px;height:21.8px;box-sizing:border-box;border:1px solid #bab7b2;border-radius:2px;background:#fff"></div>
<div class="t" style="left:687.50px;top:644.88px;font-size:12.90px;color:#111">317.86</div>
<div style="position:absolute;left:1189px;top:644px;width:14px;height:14px;box-sizing:border-box;border:1px solid #b9b7b3;background:#fff;border-radius:2px"></div>
<div class="t" style="left:1207.70px;top:645.06px;font-size:12.92px;color:#1f1f1f">Experimental</div>
<div style="position:absolute;left:2.4px;top:673.5px;width:48px;height:20px;box-sizing:border-box;border:1px solid #bdbab5;border-radius:3px;background:linear-gradient(#fbfbfa,#efeeec)"></div>
<div class="t" style="left:10.00px;top:678.19px;font-size:12.26px;color:#1f1f1f">Reset</div>
<div class="t" style="left:56.90px;top:676.88px;font-size:12.90px;letter-spacing:0.102px;font-weight:bold;color:#111">Left-Click:</div>
<div class="t" style="left:125.90px;top:677.20px;font-size:12.50px;letter-spacing:-0.035px;color:#1f1f1f">Rotate.</div>
<div class="t" style="left:171.30px;top:676.88px;font-size:12.90px;letter-spacing:0.166px;font-weight:bold;color:#111">Middle-Click:</div>
<div class="t" style="left:257.80px;top:677.20px;font-size:12.50px;letter-spacing:-0.095px;color:#1f1f1f">Move X/Y.</div>
<div class="t" style="left:318.00px;top:676.88px;font-size:12.90px;letter-spacing:0.217px;font-weight:bold;color:#111">Right-Click/Mouse Wheel:</div>
<div class="t" style="left:484.20px;top:677.20px;font-size:12.50px;letter-spacing:-0.146px;color:#1f1f1f">: Zoom.</div>
<div class="t" style="left:531.20px;top:676.88px;font-size:12.90px;letter-spacing:0.115px;font-weight:bold;color:#111">Shift</div>
<div class="t" style="left:561.70px;top:677.20px;font-size:12.50px;letter-spacing:0.129px;color:#1f1f1f">: More options.</div>
<div class="t" style="left:1242.00px;top:673.94px;font-size:12.70px;color:#1f1f1f">31 fps</div>
<div style="position:absolute;left:1297px;top:684px;width:1px;height:1px;background:#c5c2bd"></div>
<div style="position:absolute;left:1297px;top:687px;width:1px;height:1px;background:#c5c2bd"></div>
<div style="position:absolute;left:1294px;top:687px;width:1px;height:1px;background:#c5c2bd"></div>
<div style="position:absolute;left:1297px;top:690px;width:1px;height:1px;background:#c5c2bd"></div>
<div style="position:absolute;left:1294px;top:690px;width:1px;height:1px;background:#c5c2bd"></div>
<div style="position:absolute;left:1291px;top:690px;width:1px;height:1px;background:#c5c2bd"></div>
<div style="position:absolute;left:1297px;top:693px;width:1px;height:1px;background:#c5c2bd"></div>
<div style="position:absolute;left:1294px;top:693px;width:1px;height:1px;background:#c5c2bd"></div>
<div style="position:absolute;left:1291px;top:693px;width:1px;height:1px;background:#c5c2bd"></div>
<div style="position:absolute;left:1288px;top:693px;width:1px;height:1px;background:#c5c2bd"></div>
</body></html>
